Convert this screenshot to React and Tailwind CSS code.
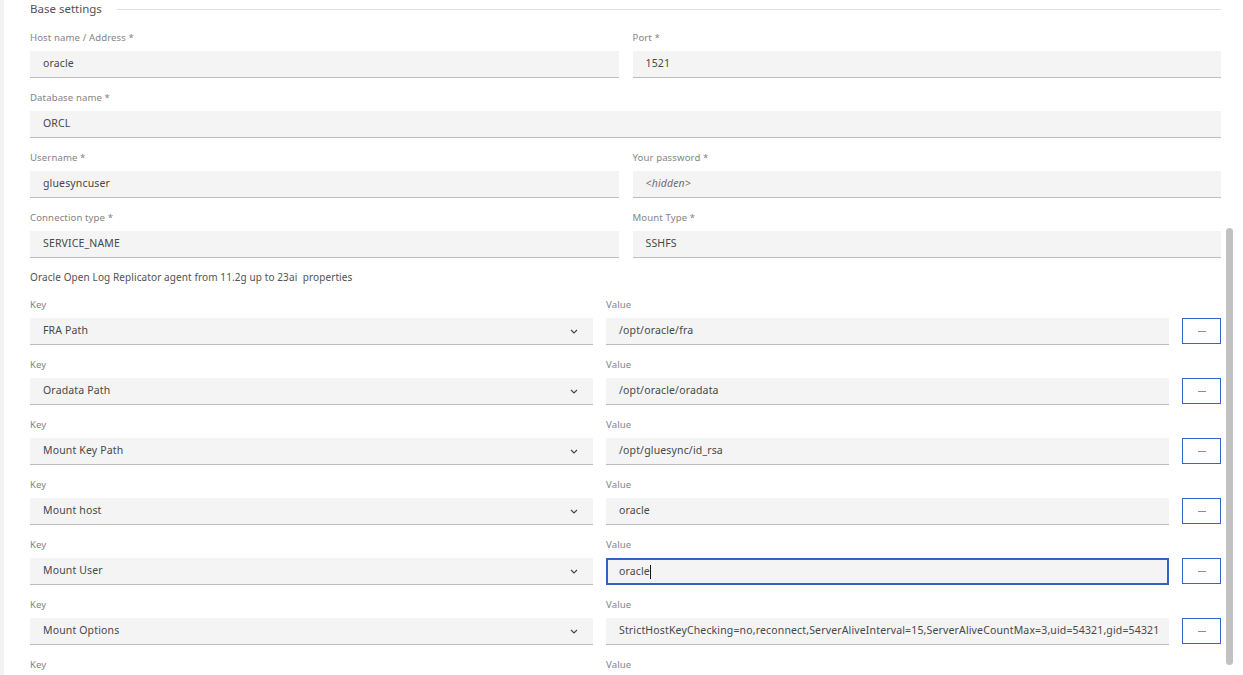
import React from "react";

const Label = ({ children }) => (
    <div className="h-[14px] text-[9.6px] leading-[15px] tracking-[0.1px] text-[#858585] whitespace-nowrap">
        {children}
    </div>
);

const Field = ({ label, value, italic, focused }) => (
    <div className="flex flex-col">
        <Label>{label}</Label>
        <div
            className={
                "mt-[7px] h-[27px] bg-[#f4f4f4] flex items-center text-[10.5px] tracking-[0.15px] text-[#484848] whitespace-nowrap overflow-hidden " +
                (focused ? "border-2 border-[#2f63c6] px-[11px]" : "border-b border-[#bdbdbd] px-[13px]")
            }
        >
            <span className={italic ? "italic text-[#6f6f6f]" : ""}>{value}</span>
            {focused && <span className="w-px h-[14px] bg-[#161616]" />}
        </div>
    </div>
);

const Chevron = () => (
    <svg width="8" height="5" viewBox="0 0 8 5" className="shrink-0">
        <path d="M1 1l3 3 3-3" fill="none" stroke="#4a4a4a" strokeWidth="1.2" />
    </svg>
);

const KeyValueRow = ({ name, value, focused }) => (
    <div className="flex gap-[13px] items-end">
        <div className="flex-1 flex flex-col">
            <Label>Key</Label>
            <div className="mt-[7px] h-[27px] bg-[#f4f4f4] border-b border-[#bdbdbd] pl-[13px] pr-[15px] flex items-center justify-between text-[10.5px] tracking-[0.15px] text-[#484848]">
                <span>{name}</span>
                <Chevron />
            </div>
        </div>
        <div className="flex-1 min-w-0">
            <Field label="Value" value={value} focused={focused} />
        </div>
        <button className="w-[39px] h-[26px] mb-px border border-[#3465c4] bg-white flex items-center justify-center shrink-0">
            <span className="w-[8px] h-px bg-[#6f8fd0]" />
        </button>
    </div>
);

const rows = [
    { name: "FRA Path", value: "/opt/oracle/fra" },
    { name: "Oradata Path", value: "/opt/oracle/oradata" },
    { name: "Mount Key Path", value: "/opt/gluesync/id_rsa" },
    { name: "Mount host", value: "oracle" },
    { name: "Mount User", value: "oracle", focused: true },
    { name: "Mount Options", value: "StrictHostKeyChecking=no,reconnect,ServerAliveInterval=15,ServerAliveCountMax=3,uid=54321,gid=54321" },
    { name: "", value: "" },
];

export default function App() {
    return (
        <div className="relative w-[1243px] h-[675px] overflow-hidden bg-white flex font-['Noto_Sans',sans-serif]">
            <div className="w-[4px] bg-[#f2f2f2] shrink-0" />
            <div className="flex-1 pl-[26px] pr-[22px] flex flex-col gap-[12px]">
                {/* Heading */}
                <div className="h-[18px] flex items-center gap-[15px]">
                    <span className="text-[11.5px] leading-[18px] text-[#525252]">Base settings</span>
                    <div className="flex-1 h-px bg-[#e0e0e0]" />
                </div>

                <div className="grid grid-cols-2 gap-x-[14px]">
                    <Field label="Host name / Address *" value="oracle" />
                    <Field label="Port *" value="1521" />
                </div>
                <Field label="Database name *" value="ORCL" />
                <div className="grid grid-cols-2 gap-x-[14px]">
                    <Field label="Username *" value="gluesyncuser" />
                    <Field label="Your password *" value="<hidden>" italic />
                </div>
                <div className="grid grid-cols-2 gap-x-[14px]">
                    <Field label="Connection type *" value="SERVICE_NAME" />
                    <Field label="Mount Type *" value="SSHFS" />
                </div>

                <div className="h-[14px] mb-px text-[10px] leading-[14px] tracking-[0.1px] text-[#525252] whitespace-pre">
                    Oracle Open Log Replicator agent from 11.2g up to 23ai  properties
                </div>

                {rows.map((r, i) => (
                    <KeyValueRow key={i} {...r} />
                ))}
            </div>

            {/* scrollbar thumb */}
            <div className="absolute left-[1226px] top-[228px] w-[7px] h-[437px] rounded-full bg-[#c1c1c1]" />
        </div>
    );
}
